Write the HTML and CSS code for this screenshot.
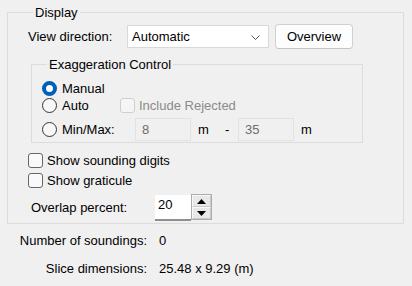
FILE: index.html
```html
<!DOCTYPE html>
<html lang="en">
<head>
  <meta charset="UTF-8" />
  <title>Display</title>
  <link rel="stylesheet" href="styles.css">
</head>
<body>

  <div class="page">
    <fieldset class="group outer">
      <legend>Display</legend>

      <div class="row view-row">
        <span class="lbl view-lbl">View direction:</span>
        <div class="combo">
          <span>Automatic</span>
          <svg class="chev" width="9" height="5" viewBox="0 0 9 5"><path d="M0.5 0.5 L4.5 4.5 L8.5 0.5" fill="none" stroke="#555" stroke-width="1"/></svg>
        </div>
        <div class="btn">Overview</div>
      </div>

      <fieldset class="group inner">
        <legend>Exaggeration Control</legend>

        <div class="row opt-row">
          <span class="radio checked"></span><span class="lbl">Manual</span>
        </div>

        <div class="row opt-row">
          <div class="opt-cell">
            <span class="radio"></span><span class="lbl">Auto</span>
          </div>
          <span class="check disabled"></span><span class="lbl muted">Include Rejected</span>
        </div>

        <div class="row minmax-row">
          <div class="opt-cell wide">
            <span class="radio"></span><span class="lbl">Min/Max:</span>
          </div>
          <div class="field disabled">8</div>
          <span class="unit">m</span>
          <span class="dash">-</span>
          <div class="field disabled">35</div>
          <span class="unit">m</span>
        </div>
      </fieldset>

      <div class="row chk-row first">
        <span class="check"></span><span class="lbl">Show sounding digits</span>
      </div>
      <div class="row chk-row">
        <span class="check"></span><span class="lbl">Show graticule</span>
      </div>

      <div class="row overlap-row">
        <span class="lbl overlap-lbl">Overlap percent:</span>
        <div class="spin">
          <div class="spin-val">20</div>
          <div class="spin-btns">
            <div class="spin-btn"><svg width="9" height="5" viewBox="0 0 9 5"><path d="M0 5 L4.5 0 L9 5 Z" fill="#000"/></svg></div>
            <div class="spin-btn"><svg width="9" height="5" viewBox="0 0 9 5"><path d="M0 0 L4.5 5 L9 0 Z" fill="#000"/></svg></div>
          </div>
        </div>
      </div>
    </fieldset>

    <div class="stats">
      <span class="stat-lbl">Number of soundings:</span><span>0</span>
      <span class="stat-lbl">Slice dimensions:</span><span>25.48 x 9.29 (m)</span>
    </div>
  </div>

</body>
</html>
```

FILE: styles.css
```css
body { margin: 0; background: #f0f0f0; color: #000; font: 13px/15px "Liberation Sans", Arial, sans-serif; }
.page { padding: 5px 0 0 7px; width: 397px; }

.group { border: 1px solid #dcdcdc; margin: 0; padding: 0; min-width: 0; }
.group legend { padding: 0 2px; margin-left: 5px; }
.outer { padding: 4px 0 2px 20px; }
.inner { margin: 8px 0 0 3px; width: 320px; padding: 8px 0 1px 10px; }

.row { display: flex; align-items: center; }
.lbl { white-space: nowrap; }
.muted { color: #8a8a8a; }

.view-row { height: 25px; }
.view-lbl { width: 99px; }
.combo {
  height: 21px; background: #fff; border: 1px solid #d9d9d9;
  display: flex; align-items: center; justify-content: space-between; padding: 0 8px 0 4px;
  width: 128px;
}
.chev { margin-top: 1px; }
.btn {
  margin-left: 6px; width: 76px; height: 23px; border: 1px solid #d0d0d0; border-bottom-color: #c4c4c4;
  border-radius: 4px; background: #fdfdfd; display: flex; align-items: center; justify-content: center;
}

.opt-row { height: 17px; }
.minmax-row { height: 23px; margin-top: 4px; }
.opt-cell { display: flex; align-items: center; width: 78px; }
.opt-cell.wide { width: 93px; }

.radio {
  width: 13px; height: 13px; border: 1px solid #333; border-radius: 50%; background: #f7f7f7;
  margin-right: 5px; flex: none;
}
.radio.checked { background: #fff; border: 4px solid #005fb8; width: 7px; height: 7px; }

.check {
  width: 13px; height: 13px; border: 1px solid #666; border-radius: 3px; background: #f9f9f9;
  margin-right: 4px; flex: none;
}
.check.disabled { border-color: #cfcfcf; background: #f5f5f5; }

.field {
  width: 48px; height: 21px; border: 1px solid #e2e2e2; background: #f0f0f0;
  color: #6d6d6d; padding-left: 6px; display: flex; align-items: center;
}
.unit { margin-left: 7px; width: 27px; }
.dash { width: 13px; }

.chk-row { height: 20px; }
.chk-row.first { margin-top: 7px; }

.overlap-row { height: 28px; margin-top: 3px; }
.overlap-lbl { width: 124px; padding-left: 3px; }
.spin { display: flex; height: 26px; }
.spin-val {
  width: 33px; height: 24px; background: #fff; border-top: 1px solid #f0f0f0; border-bottom: 2px solid #8f8f8f;
  padding-left: 3px; line-height: 20px;
}
.spin-btns { display: flex; flex-direction: column; border: 1px solid #adadad; width: 19px; }
.spin-btn {
  flex: 1; display: flex; align-items: center; justify-content: center;
  background: #e8e8e8; border: 1px solid #f8f8f8; border-right-color: #c8c8c8; border-bottom-color: #c8c8c8;
}

.stats {
  display: grid; grid-template-columns: 140px auto; column-gap: 12px; row-gap: 13px;
  margin-top: 9px; justify-items: start;
}
.stat-lbl { justify-self: end; }
```
